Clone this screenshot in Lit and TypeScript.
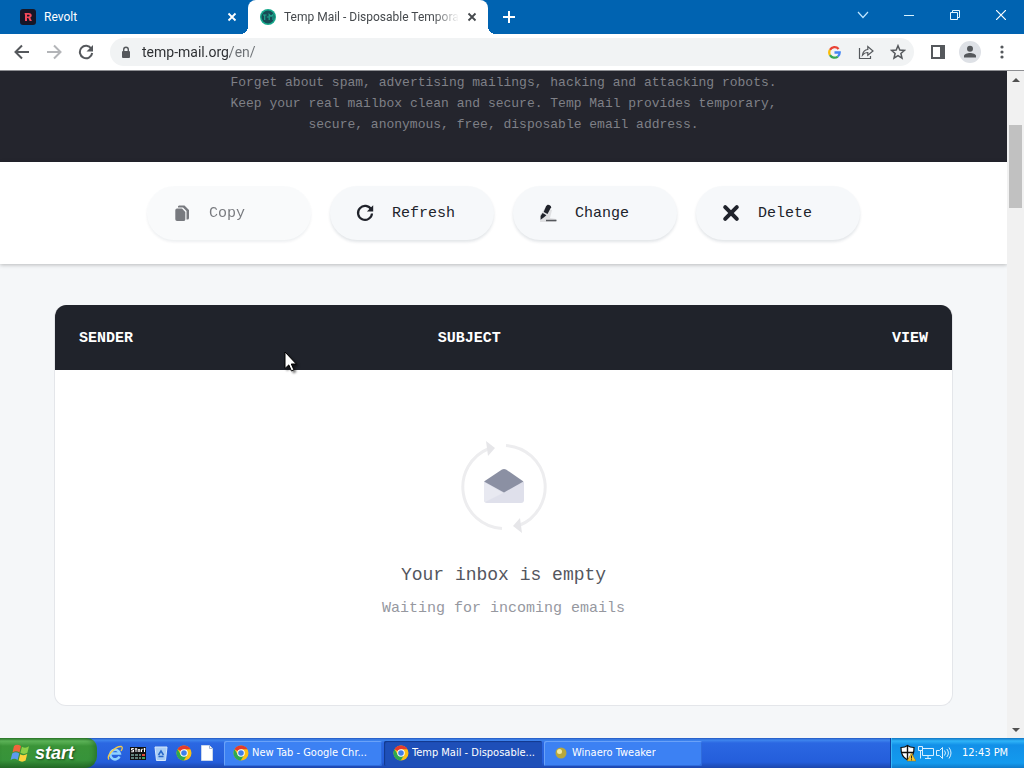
import { LitElement, html, css, svg } from "lit";
import { customElement } from "lit/decorators.js";

const chromeLogo = html`<svg class="logo" viewBox="0 0 32 32" width="16" height="16" aria-hidden="true">
  <circle cx="16" cy="16" r="15" fill="#fbc116" />
  <path d="M16 16 L3 8.5 A15 15 0 0 1 29 8.5 L16 8.5Z" fill="#e33b2e" />
  <path d="M3 8.5 A15 15 0 0 0 15.5 31 L22 20 L10 20Z" fill="#2da94f" />
  <circle cx="16" cy="16" r="7.5" fill="#fff" />
  <circle cx="16" cy="16" r="5.6" fill="#3f7fe8" />
</svg>`;

const crossPath = svg`<path d="M1.5 1.5 L8.5 8.5 M8.5 1.5 L1.5 8.5" fill="none" stroke="currentColor" stroke-width="1.8" />`;

@customElement("browser-tabs")
export class BrowserTabs extends LitElement {
  static styles = css`
    :host {
      display: flex;
      height: 34px;
      padding-left: 8px;
      background: #0063b1;
      font: 12px/16px Roboto, "Noto Sans", sans-serif;
      color: #fff;
    }
    button {
      display: grid;
      place-items: center;
      padding: 0;
      border: 0;
      background: none;
      color: inherit;
    }
    .tab {
      display: flex;
      align-items: center;
      gap: 8px;
      flex: 0 1 240px;
      min-width: 0;
      padding: 0 11px 0 12px;
      box-sizing: border-box;
    }
    .tab a {
      flex: 1;
      overflow: hidden;
      white-space: nowrap;
      color: inherit;
      text-decoration: none;
    }
    .tab.active {
      position: relative;
      background: #fff;
      color: #45494d;
      border-radius: 8px 8px 0 0;
    }
    .tab.active a {
      mask-image: linear-gradient(to right, #000 calc(100% - 26px), transparent);
    }
    .tab.active::before,
    .tab.active::after {
      content: "";
      position: absolute;
      bottom: 0;
      width: 8px;
      height: 8px;
    }
    .tab.active::before {
      right: 100%;
      background: radial-gradient(circle at 0 0, transparent 8px, #fff 8px);
    }
    .tab.active::after {
      left: 100%;
      background: radial-gradient(circle at 100% 0, transparent 8px, #fff 8px);
    }
    .new {
      width: 28px;
      margin-left: 7px;
    }
    .controls {
      display: flex;
      height: 29px;
      margin-left: auto;
    }
    .controls button {
      width: 46px;
    }
  `;

  render() {
    return html`
      <div class="tab">
        <svg width="16" height="16" viewBox="0 0 16 16" aria-hidden="true">
          <rect width="16" height="16" rx="3" fill="#171626" />
          <path d="M4.5 4h4.2c2 0 3 .9 3 2.4 0 1.100-.6 1.800-1.500 2.100l1.700 3.500H9.700L8.300 8.900H7V12H5V6L4.500 4zM7 5.700v1.700h1.500c.7 0 1.100-.3 1.100-.9s-.4-.8-1.100-.8z" fill="#f4485a" />
        </svg>
        <a href="#revolt">Revolt</a>
        <button aria-label="Close Revolt"><svg width="10" height="10">${crossPath}</svg></button>
      </div>
      <div class="tab active">
        <svg width="16" height="16" viewBox="0 0 16 16" aria-hidden="true">
          <circle cx="8" cy="8" r="8" fill="#17a98c" />
          <circle cx="8" cy="8" r="6.500" fill="#174c55" />
          <path d="M3 6h3.500M4.700 6v5M6.800 8h2.500M9.200 11V5.500l1.800 2 2-2V11" fill="none" stroke="#20a58e" stroke-width="1.200" />
        </svg>
        <a href="#temp-mail">Temp Mail - Disposable Tempora</a>
        <button aria-label="Close Temp Mail"><svg width="10" height="10">${crossPath}</svg></button>
      </div>
      <button class="new" aria-label="New tab">
        <svg width="12" height="12"><path d="M6 0v12M0 6h12" stroke="#fff" stroke-width="2" /></svg>
      </button>
      <div class="controls">
        <button aria-label="Search tabs"><svg width="12" height="8"><path d="M1 1l5 5.500L11 1" fill="none" stroke="#bfe6ff" stroke-width="1.200" /></svg></button>
        <button aria-label="Minimize"><svg width="10" height="10"><path d="M0 5.500h10" stroke="#d7f3ff" /></svg></button>
        <button aria-label="Restore"><svg width="10" height="10"><path d="M.5 2.500h7v7h-7zM2.500 2.500v-2h7v7h-2" fill="none" stroke="#e5f7ff" /></svg></button>
        <button aria-label="Close window"><svg width="10" height="10"><path d="M0 0l10 10M10 0L0 10" stroke="#fff" stroke-width="1.200" /></svg></button>
      </div>
    `;
  }
}

@customElement("browser-toolbar")
export class BrowserToolbar extends LitElement {
  static styles = css`
    :host {
      display: flex;
      align-items: center;
      gap: 8px;
      height: 37px;
      padding: 0 6px;
      box-sizing: border-box;
      border-bottom: 1px solid #8e8f93;
      background: #fff;
      color: #55585c;
    }
    .group {
      display: flex;
    }
    button {
      display: grid;
      place-items: center;
      width: 32px;
      height: 28px;
      padding: 0;
      border: 0;
      background: none;
      color: inherit;
    }
    .dim {
      color: #b3b5b8;
    }
    .omnibox {
      display: flex;
      flex: 1;
      align-items: center;
      min-width: 0;
      height: 28px;
      border-radius: 14px;
      background: #f1f3f4;
    }
    .omnibox label {
      display: grid;
      place-items: center;
      width: 32px;
    }
    .url {
      flex: 1;
      min-width: 0;
      padding: 0;
      border: 0;
      outline: 0;
      font: 14px/20px Roboto, "Noto Sans", sans-serif;
      background: linear-gradient(to right, #2b2d30 88px, #6b6f73 88px) text;
      color: transparent;
    }
    .avatar {
      display: block;
    }
  `;

  render() {
    return html`
      <div class="group">
        <button aria-label="Back"><svg width="16" height="16"><path d="M15 8H2M8 1.500L1.500 8 8 14.500" fill="none" stroke="currentColor" stroke-width="2" /></svg></button>
        <button class="dim" aria-label="Forward"><svg width="16" height="16"><path d="M1 8h13M8 1.500L14.500 8 8 14.500" fill="none" stroke="currentColor" stroke-width="2" /></svg></button>
        <button aria-label="Reload"><svg width="16" height="16"><path d="M13.300 4.700A6.200 6.200 0 1 0 14.200 9" fill="none" stroke="currentColor" stroke-width="2" /><path d="M15 1v6.500H8.500z" fill="currentColor" /></svg></button>
      </div>
      <div class="omnibox">
        <label for="url" aria-label="Address">
          <svg width="10" height="13"><rect x="1" y="5" width="8" height="7" rx="1" fill="currentColor" /><path d="M2.700 5.500V3.500a2.300 2.300 0 0 1 4.600 0v2" fill="none" stroke="currentColor" stroke-width="1.400" /></svg>
        </label>
        <input id="url" class="url" type="text" spellcheck="false" value="temp-mail.org/en/" />
        <button aria-label="Google">
          <svg width="13" height="13" viewBox="0 0 24 24" fill="none" stroke-width="4.200">
            <path d="M19.500 5.500A9.800 9.800 0 0 0 3.600 7.200" stroke="#ea4335" />
            <path d="M3.600 7.200a9.800 9.800 0 0 0 0 9.600" stroke="#fbbc05" />
            <path d="M3.600 16.800a9.800 9.800 0 0 0 14.600 2.600" stroke="#34a853" />
            <path d="M18.200 19.400A9.800 9.800 0 0 0 21.600 12H12" stroke="#4285f4" />
          </svg>
        </button>
        <button aria-label="Share"><svg width="16" height="16" fill="none" stroke="currentColor" stroke-width="1.200"><path d="M1.500 4v10.500h11V12" /><path d="M4.500 11C5 7.500 6.800 5.800 9.800 5.500V2.500L15 7l-5.200 4.300V8.500C7.500 8.400 5.900 9.300 4.500 11z" /></svg></button>
        <button aria-label="Bookmark"><svg width="16" height="16" viewBox="0 0 16 16"><path d="M8 1.700l1.800 4.300 4.700.4-3.600 3.100 1.100 4.600L8 11.600l-4 2.500 1.100-4.600L1.500 6.400 6.200 6z" fill="none" stroke="currentColor" stroke-width="1.500" /></svg></button>
      </div>
      <div class="group">
        <button aria-label="Side panel"><svg width="14" height="14"><path d="M1 1h12v12H1z" fill="none" stroke="currentColor" stroke-width="2" /><path d="M9 1h4v12H9z" fill="currentColor" /></svg></button>
        <button aria-label="Profile">
          <svg class="avatar" width="22" height="22"><circle cx="11" cy="11" r="11" fill="#dee1e6" /><circle cx="11" cy="7.700" r="3" fill="currentColor" /><path d="M5 16.500v-1.500c0-2 3.500-3 6-3s6 1 6 3v1.500z" fill="currentColor" /></svg>
        </button>
        <button aria-label="Menu"><svg width="4" height="16" fill="currentColor"><circle cx="2" cy="3" r="1.600" /><circle cx="2" cy="8" r="1.600" /><circle cx="2" cy="13" r="1.600" /></svg></button>
      </div>
    `;
  }
}

const actions = [
  {
    label: "Copy",
    disabled: true,
    icon: svg`<path d="M6 1.500h5.500L16 6v8a1.500 1.500 0 0 1-1.500 1.500h-1V7L10 3.500H5A1.600 1.600 0 0 1 6 1.500z" /><path d="M4 4.500h5L12.300 8v7.500A1.700 1.700 0 0 1 10.600 17H4a1.700 1.700 0 0 1-1.700-1.700V6.200A1.700 1.700 0 0 1 4 4.500z" />`,
  },
  {
    label: "Refresh",
    disabled: false,
    icon: svg`<path d="M15.200 5.600A7 7 0 1 0 16 9.500" fill="none" stroke="currentColor" stroke-width="2.200" /><path d="M17.200 1.200v6.300h-6.300l2-2 2.200-2.300z" />`,
  },
  {
    label: "Change",
    disabled: false,
    icon: svg`<path d="M1 11l5-7 7 2-2 8 6 1v3H1z" fill="#dfe0e2" /><path d="M7 2.300 8.300 1c1-.8 4 .7 3.800 2.200L8.500 10 4.700 8z" /><path d="M3.600 9l3.800 2.200L5 13.300l-3.400 2.500V12z" /><path d="M7 16.500h10.500" stroke="#55585c" stroke-width="1.500" />`,
  },
  {
    label: "Delete",
    disabled: false,
    icon: svg`<path d="M3.200 3.200l11.600 11.600M14.800 3.200L3.200 14.800" stroke="currentColor" stroke-width="4" stroke-linecap="round" />`,
  },
];

@customElement("mail-page")
export class MailPage extends LitElement {
  static styles = css`
    :host {
      display: flex;
      flex-direction: column;
      min-width: 0;
      overflow: hidden;
      background: #f5f7f9;
      font-family: "Liberation Mono", monospace;
    }
    .intro {
      padding: 1px 24px 27px;
      background: #24252d;
      color: #7f8087;
      font-size: 13px;
      line-height: 21px;
      text-align: center;
    }
    .intro p {
      max-width: 560px;
      margin: 0 auto;
    }
    .actions {
      display: flex;
      justify-content: center;
      gap: 19px;
      padding: 24px 24px;
      background: #fff;
      box-shadow: 0 1px 4px #00000040;
    }
    .action {
      display: flex;
      align-items: center;
      gap: 18px;
      width: 164px;
      height: 54px;
      padding: 0 26px;
      border: 0;
      border-radius: 27px;
      background: #f6f8fa;
      box-shadow: 0 2px 3px #0f28401f;
      color: #20232b;
      font: 15px/20px "Liberation Mono", monospace;
    }
    .action:disabled {
      opacity: 0.6;
      color: #20232b;
    }
    .action svg {
      flex: none;
    }
    .action span {
      padding-top: 2px;
    }
    .inbox {
      margin: 41px 54px 32px;
      flex: 1;
      display: flex;
      border: 1px solid #e4e6ea;
      border-top: 0;
      border-radius: 12px;
      background: #fff;
      overflow: hidden;
    }
    table {
      width: 100%;
      height: 100%;
      border-collapse: collapse;
      table-layout: fixed;
    }
    th {
      height: 65px;
      padding: 2px 24px 0;
      box-sizing: border-box;
      background: #20232b;
      color: #fff;
      font-size: 15px;
      line-height: 20px;
      text-align: left;
    }
    .sender {
      width: 40%;
    }
    .view {
      width: 20%;
      text-align: right;
    }
    td {
      padding: 0 24px 16px;
      text-align: center;
      vertical-align: middle;
    }
    .art {
      display: block;
      margin: 0 auto 30px;
    }
    h2 {
      margin: 0 0 12px;
      color: #54565e;
      font-size: 18px;
      font-weight: 400;
      line-height: 24px;
    }
    .waiting {
      margin: 0;
      color: #96989f;
      font-size: 15px;
      line-height: 20px;
    }
  `;

  render() {
    return html`
      <header class="intro">
        <p>
          Forget about spam, advertising mailings, hacking and attacking robots.
          Keep your real mailbox clean and secure. Temp Mail provides temporary,
          secure, anonymous, free, disposable email address.
        </p>
      </header>
      <nav class="actions">
        ${actions.map(
          (a) => html`<button class="action" ?disabled=${a.disabled}>
            <svg width="18" height="18" fill="currentColor" aria-hidden="true">${a.icon}</svg><span>${a.label}</span>
          </button>`
        )}
      </nav>
      <section class="inbox">
        <table>
          <thead>
            <tr>
              <th class="sender">SENDER</th>
              <th>SUBJECT</th>
              <th class="view">VIEW</th>
            </tr>
          </thead>
          <tbody>
            <tr>
              <td colspan="3">
                <svg class="art" width="88" height="92" viewBox="0 0 88 92" aria-hidden="true">
                  <path d="M42 87.500A41.500 41.500 0 0 1 29 7.500M46 4.500a41.500 41.500 0 0 1 13 80" fill="none" stroke="#ededef" stroke-width="3" />
                  <path d="M26 0l9 7-7 8zM62 92l-9-7 7-8z" fill="#e6e6e9" />
                  <path d="M24 41h40v18a3 3 0 0 1-3 3H27a3 3 0 0 1-3-3z" fill="#dfe0eb" />
                  <path d="M24 41l19 11-18 9a3 3 0 0 1-1-2z" fill="#e8e9f1" />
                  <path d="M24 40.500L42 28.500q2-1 4 0L63.500 40.500 44 51.500z" fill="#8b90a3" />
                </svg>
                <h2>Your inbox is empty</h2>
                <p class="waiting">Waiting for incoming emails</p>
              </td>
            </tr>
          </tbody>
        </table>
      </section>
    `;
  }
}

@customElement("task-bar")
export class TaskBar extends LitElement {
  static styles = css`
    :host {
      display: flex;
      height: 30px;
      background: linear-gradient(#2257c0, #3f86ee 2px, #2b67e2 5px, #245edb 24px, #1c46ad);
      color: #fff;
      font: 11px/16px "DejaVu Sans Condensed", "DejaVu Sans", sans-serif;
    }
    button {
      padding: 0;
      border: 0;
      background: none;
      color: inherit;
      font: inherit;
    }
    .start {
      display: flex;
      align-items: center;
      gap: 4px;
      width: 97px;
      padding-left: 10px;
      border-radius: 0 10px 12px 0;
      background: linear-gradient(#2c7a2c, #5fb65a 3px, #3a9438 8px, #37933a 22px, #246b27);
      box-shadow: inset -3px 0 4px #1e5f2180;
      font: italic 700 18px/24px "Liberation Sans", sans-serif;
      text-shadow: 1px 1px 2px #1a4a1b;
    }
    .quick {
      display: flex;
      align-items: center;
      gap: 7px;
      padding: 0 9px 0 10px;
    }
    .quick button {
      display: grid;
      place-items: center;
      width: 16px;
      height: 16px;
    }
    .tasks {
      display: flex;
      flex: 1;
      align-items: center;
      gap: 2px;
      min-width: 0;
    }
    .task {
      display: flex;
      align-items: center;
      gap: 3px;
      flex: 0 1 158px;
      min-width: 0;
      height: 25px;
      padding: 0 4px 0 9px;
      box-sizing: border-box;
      border-radius: 2px;
      background: #3c81f3;
      box-shadow: inset 1px 1px 0 #6aa2f8, inset -1px -1px 0 #2f6cdc;
    }
    .task.active {
      background: #1e4fb8;
      box-shadow: inset 1px 1px 1px #12388c;
    }
    .task span {
      overflow: hidden;
      text-overflow: ellipsis;
      white-space: nowrap;
    }
    .task svg {
      flex: none;
    }
    .tray {
      display: flex;
      align-items: center;
      gap: 2px;
      width: 134px;
      padding: 0 0 0 9px;
      box-sizing: border-box;
      border-left: 1px solid #103f9c;
      background: linear-gradient(#1175c4, #2fb4f8 3px, #1290e8 7px, #139aee 25px, #0f79c8);
      box-shadow: inset 1px 0 0 #35b5f7;
    }
    time {
      margin-left: 8px;
      white-space: nowrap;
    }
  `;

  render() {
    return html`
      <button class="start">
        <svg width="21" height="20" viewBox="0 0 21 20" aria-hidden="true">
          <path d="M4 3q3-2.500 7 0L9.500 9.500q-3.500-2.500-7 0z" fill="#f0653c" />
          <path d="M12 3.800q3.500 2 7-.5l-1.600 6.500q-3.500 2.200-7 0z" fill="#8bd048" />
          <path d="M2.200 10.600q3.500-2.500 7 0L7.600 17q-3.300-2.300-7 0z" fill="#5c9bf0" />
          <path d="M10.200 11.200q3.500 2 7-.2L15.600 17.500q-3.500 2.300-7 0z" fill="#fbd23c" />
        </svg>
        start
      </button>
      <div class="quick">
        <button aria-label="Internet Explorer">
          <svg width="16" height="16" fill="none"><path d="M12.500 11.500A4.800 4.800 0 1 1 12.800 8.500H4.500" stroke="#8fd2ff" stroke-width="2.600" /><path d="M2 14.500C-1 11 8 1 14.500 1.500c1.500.5.5 3-.5 4.500" stroke="#f2c94c" stroke-width="1.300" /></svg>
        </button>
        <button aria-label="Start menu settings">
          <svg width="16" height="13"><rect width="16" height="13" fill="#111" /><path d="M3.800 1.500H1.500v1.500h2v1.800H1.200M4.800 2h2.500M6 1v4M8.200 5V2.500h1.600V5M11.500 5V2.300h1.300M13.500 2h2M14.500 1v4" fill="none" stroke="#fff" stroke-width="1" /><path d="M1 8h10M1 11h10" stroke="#5f7f78" stroke-width="2" stroke-dasharray="3 1" /><path d="M12 8h3" stroke="#e04a3a" stroke-width="2" /><path d="M12 11h3" stroke="#46a05a" stroke-width="2" /></svg>
        </button>
        <button aria-label="Recycle Bin">
          <svg width="14" height="15"><path d="M1 1h12l-1.500 13.500h-9z" fill="#a9cdf5" stroke="#d6e8fb" /><path d="M4.500 9L7 5l2.500 4M4.500 10.500h5" fill="none" stroke="#2867c8" stroke-width="1.500" /></svg>
        </button>
        <button aria-label="Google Chrome">${chromeLogo}</button>
        <button aria-label="New document">
          <svg width="12" height="16"><path d="M.5.5h8l3 3v12H.5z" fill="#fff" stroke="#c9d6ea" /><path d="M8.500.5v3h3" fill="none" stroke="#a5b4cc" /></svg>
        </button>
      </div>
      <div class="tasks">
        <button class="task">${chromeLogo}<span>New Tab - Google Chr...</span></button>
        <button class="task active">${chromeLogo}<span>Temp Mail - Disposable...</span></button>
        <button class="task">
          <svg width="16" height="16" aria-hidden="true"><circle cx="8" cy="8" r="5.500" fill="#b9a83c" /><circle cx="6.500" cy="6.500" r="2.500" fill="#f2eaa0" /></svg>
          <span>Winaero Tweaker</span>
        </button>
      </div>
      <div class="tray">
        <svg width="16" height="18" aria-hidden="true"><path d="M7.500 1.500C9 2.800 11.500 3.500 14 3.500c.3 6-1.500 10-6.500 12.500C2.500 13.500.8 9.500 1 3.500c2.500 0 5-.7 6.500-2z" fill="#fff" stroke="#111" stroke-width="1.200" /><path d="M7.500 2v14M1 8.500h13" stroke="#111" stroke-width="1.400" /><path d="M11.500 9l4.500 8H7z" fill="#f5c52c" stroke="#8a6a10" stroke-width=".5" /><path d="M11.500 11.500v3M11.500 15.300v1" stroke="#222" /></svg>
        <svg width="16" height="14" fill="none" stroke="#d9f0ff"><path d="M4.500 2.500h11v7h-11zM7 12.500h6M10 10v2.500M.5.500h4v4h-4zM2.500 5v7.500" /></svg>
        <svg width="16" height="14" fill="none" stroke="#d9f0ff"><path d="M.5 4.500h3l3-3v11l-3-3h-3zM8.500 4.500q2 2.500 0 5M10.800 3q3.200 4 0 8M13 1.500q4 5.500 0 11" /></svg>
        <time>12:43 PM</time>
      </div>
    `;
  }
}

@customElement("app-root")
export class AppRoot extends LitElement {
  static styles = css`
    :host {
      display: flex;
      flex-direction: column;
      position: relative;
      height: 100vh;
      overflow: hidden;
    }
    .viewport {
      display: flex;
      flex: 1;
      min-height: 0;
    }
    mail-page {
      flex: 1;
    }
    .scrollbar {
      display: flex;
      flex-direction: column;
      align-items: center;
      width: 17px;
      background: #f1f1f1;
    }
    .arrow {
      display: grid;
      place-items: center;
      height: 17px;
    }
    .track {
      flex: 1;
      width: 13px;
      padding-top: 37px;
    }
    .thumb {
      height: 83px;
      background: #c1c1c1;
    }
    .cursor {
      position: absolute;
      left: 284px;
      top: 351px;
      filter: drop-shadow(2px 2px 1px #0008);
    }
  `;

  render() {
    return html`
      <browser-tabs></browser-tabs>
      <browser-toolbar></browser-toolbar>
      <div class="viewport">
        <mail-page></mail-page>
        <div class="scrollbar">
          <div class="arrow"><svg width="8" height="4"><path d="M0 4l4-4 4 4z" fill="#505050" /></svg></div>
          <div class="track"><div class="thumb"></div></div>
          <div class="arrow"><svg width="8" height="4"><path d="M0 0l4 4 4-4z" fill="#505050" /></svg></div>
        </div>
      </div>
      <task-bar></task-bar>
      <svg class="cursor" width="13" height="21" aria-hidden="true">
        <path d="M1 1v16.500l3.800-3.600 2.600 6 2.500-1.100-2.600-5.800h5z" fill="#fff" stroke="#000" />
      </svg>
    `;
  }
}
